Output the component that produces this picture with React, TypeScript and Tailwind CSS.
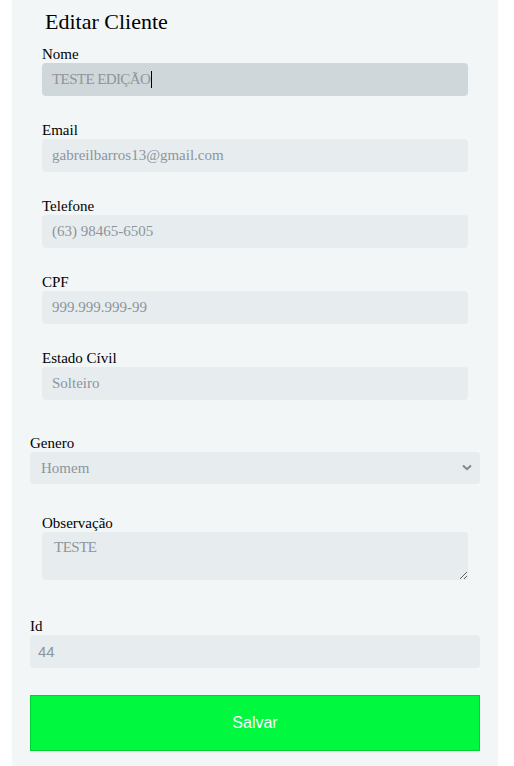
import React from "react";

const serif = { fontFamily: '"Liberation Serif", "DejaVu Serif", serif' };

function Field({ label, value }: { label: string; value: string }) {
  return (
    <div className="mx-3 mt-[25px] flex flex-col">
      <label className="h-[18px] text-[15px] leading-[18px] text-black">{label}</label>
      <input
        readOnly
        value={value}
        className="h-[33px] w-full rounded-[4px] bg-[#e7ecef] px-[10px] text-[15px] text-[#8d959c] outline-none"
        style={serif}
      />
    </div>
  );
}

export default function App() {
  return (
    <div className="min-h-[766px] w-full bg-white" style={serif}>
      <div className="mx-[12px] min-h-[766px] w-[486px] bg-[#f2f6f7] px-[18px] pb-4">
        <h1 className="mx-[15px] pt-[8px] h-[45px] text-[22px] leading-[28px] text-black">Editar Cliente</h1>
        <div className="mx-3 flex flex-col">
          <label className="h-[18px] text-[15px] leading-[18px] text-black">Nome</label>
          <div className="flex h-[33px] w-full items-center rounded-[4px] bg-[#d0d7db] px-[10px] text-[15px] text-[#8d959c]">
            <span className="tracking-[-0.6px]">TESTE EDIÇÃO</span>
            <span className="ml-[1px] inline-block h-[17px] w-[1px] bg-black" />
          </div>
        </div>
        <Field label="Email" value="gabreilbarros13@gmail.com" />
        <Field label="Telefone" value="(63) 98465-6505" />
        <Field label="CPF" value="999.999.999-99" />
        <Field label="Estado Cívil" value="Solteiro" />

        <div className="mt-[34px] flex flex-col">
          <label className="h-[18px] text-[15px] leading-[18px] text-black">Genero</label>
          <div className="relative">
            <select
              className="h-[32px] w-full appearance-none rounded-[4px] bg-[#e7ecef] px-[11px] text-[15px] text-[#8d959c] outline-none"
              style={serif}
              defaultValue="Homem"
            >
              <option>Homem</option>
              <option>Mulher</option>
            </select>
            <svg
              className="pointer-events-none absolute right-[8px] top-[12px]"
              width="10"
              height="7"
              viewBox="0 0 10 7"
            >
              <path d="M1 1.5 L5 5.2 L9 1.5" fill="none" stroke="#7d8890" strokeWidth="2" />
            </svg>
          </div>
        </div>

        <div className="mx-3 mt-[30px] flex flex-col">
          <label className="h-[18px] text-[15px] leading-[18px] text-black">Observação</label>
          <textarea
            readOnly
            value="TESTE"
            className="block h-[48px] w-full rounded-[4px] bg-[#e7ecef] px-[12px] pt-[6px] text-[15px] leading-[18px] tracking-[-0.5px] text-[#8d959c] outline-none"
            style={serif}
          />
        </div>

        <div className="mt-[37px] flex flex-col">
          <label className="h-[18px] text-[15px] leading-[18px] text-black">Id</label>
          <input
            readOnly
            value="44"
            className="h-[33px] w-full rounded-[4px] bg-[#e7ecef] px-[8px] text-[15px] text-[#8d959c] outline-none"
            style={{ fontFamily: '"Liberation Sans", Arial, sans-serif' }}
          />
        </div>

        <button
          className="mt-[27px] flex h-[56px] w-full items-center justify-center border border-[#00d233] bg-[#00f83e] text-[16px] text-white"
          style={{ fontFamily: '"Liberation Sans", Arial, sans-serif' }}
        >
          Salvar
        </button>
      </div>
    </div>
  );
}
